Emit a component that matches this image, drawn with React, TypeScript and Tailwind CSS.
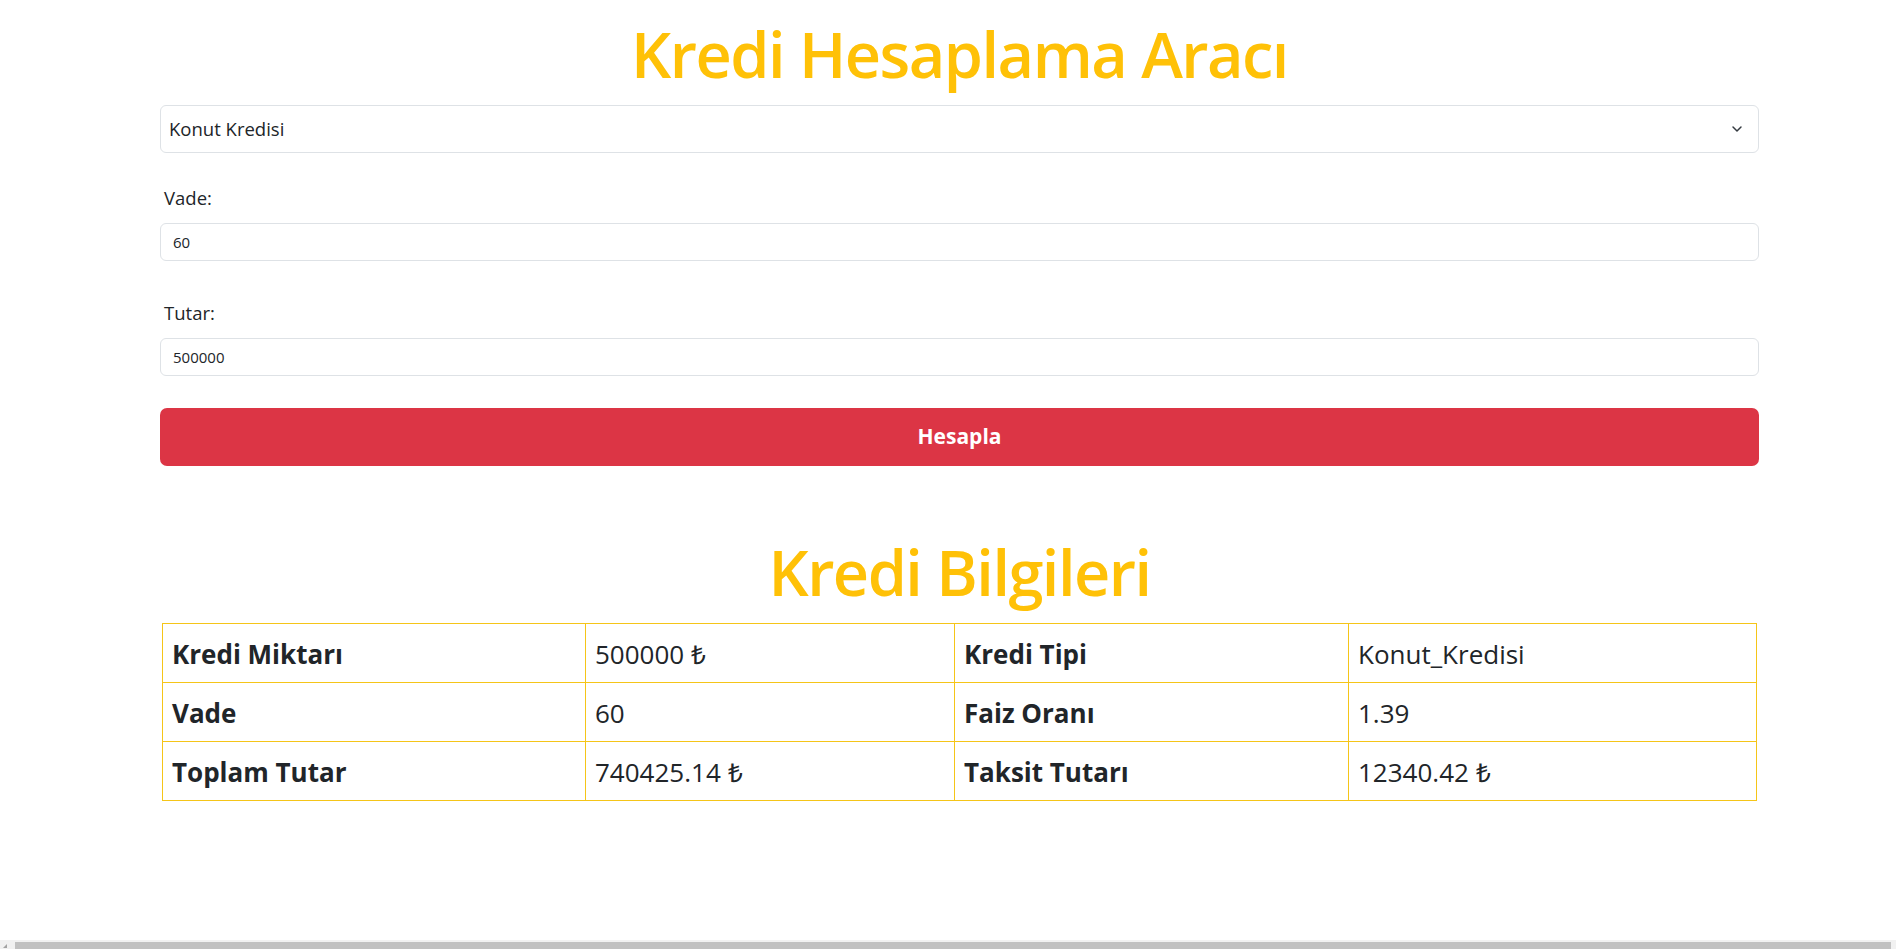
import { ChevronDown } from 'lucide-react';

const rows: [string, string, string, string][] = [
  ['Kredi Miktarı', '500000 ₺', 'Kredi Tipi', 'Konut_Kredisi'],
  ['Vade', '60', 'Faiz Oranı', '1.39'],
  ['Toplam Tutar', '740425.14 ₺', 'Taksit Tutarı', '12340.42 ₺'],
];

function Field({ label, value }: { label: string; value: string }) {
  return (
    <div>
      <label className="block pl-[4px] text-[18.5px] leading-[30px] text-[#212529]">{label}</label>
      <input
        readOnly
        value={value}
        className="mt-[10px] block h-[38px] w-full rounded-[6px] border border-[#dee2e6] bg-white px-[12px] text-[15px] text-[#212529] outline-none"
      />
    </div>
  );
}

export default function App() {
  return (
    <div className="min-h-[949px] bg-white font-['Open_Sans',sans-serif] text-[#212529]">
      <div className="ml-[160px] w-[1599px] pb-[40px]">
        <h1 className="mt-[16px] text-center text-[63px] font-semibold leading-[76px] tracking-[-1.5px] text-[#ffc107]">
          Kredi Hesaplama Aracı
        </h1>

        <div className="mt-[13px] flex h-[48px] items-center justify-between rounded-[6px] border border-[#dee2e6] bg-white pl-[8px] pr-[13px]">
          <span className="text-[18.5px] text-[#212529]">Konut Kredisi</span>
          <ChevronDown size={16} strokeWidth={2.2} className="text-[#343a40]" />
        </div>

        <div className="mt-[30px]">
          <Field label="Vade:" value="60" />
        </div>
        <div className="mt-[37px]">
          <Field label="Tutar:" value="500000" />
        </div>

        <button className="mt-[32px] block h-[58px] w-full rounded-[7px] bg-[#dc3545] text-[21px] font-bold text-white">
          Hesapla
        </button>

        <h1 className="mt-[68px] text-center text-[63px] font-semibold leading-[76px] tracking-[-1.5px] text-[#ffc107]">
          Kredi Bilgileri
        </h1>

        <div className="mt-[13px] px-[2px]">
          <table className="w-full border-collapse">
            <colgroup>
              <col className="w-[423px]" />
              <col className="w-[369px]" />
              <col className="w-[394px]" />
              <col />
            </colgroup>
            <tbody>
              {rows.map((r) => (
                <tr key={r[0]} className="h-[59px]">
                  <td className="border border-[#f5c518] px-[9px] pt-[3px] text-[26px] font-bold">{r[0]}</td>
                  <td className="border border-[#f5c518] px-[9px] pt-[3px] text-[26px]">{r[1]}</td>
                  <td className="border border-[#f5c518] px-[9px] pt-[3px] text-[26px] font-bold">{r[2]}</td>
                  <td className="border border-[#f5c518] px-[9px] pt-[3px] text-[26px]">{r[3]}</td>
                </tr>
              ))}
            </tbody>
          </table>
        </div>
      </div>

      <div className="fixed bottom-0 left-0 right-0 h-[9px] bg-[#f1f1f1]">
        <div className="absolute left-[3px] top-[4px] h-0 w-0 border-b-[4px] border-l-[4px] border-b-[#a3a3a3] border-l-transparent" />
        <div className="absolute bottom-0 left-[15px] right-[5px] top-[2px] bg-[#c1c1c1]" />
      </div>
    </div>
  );
}
